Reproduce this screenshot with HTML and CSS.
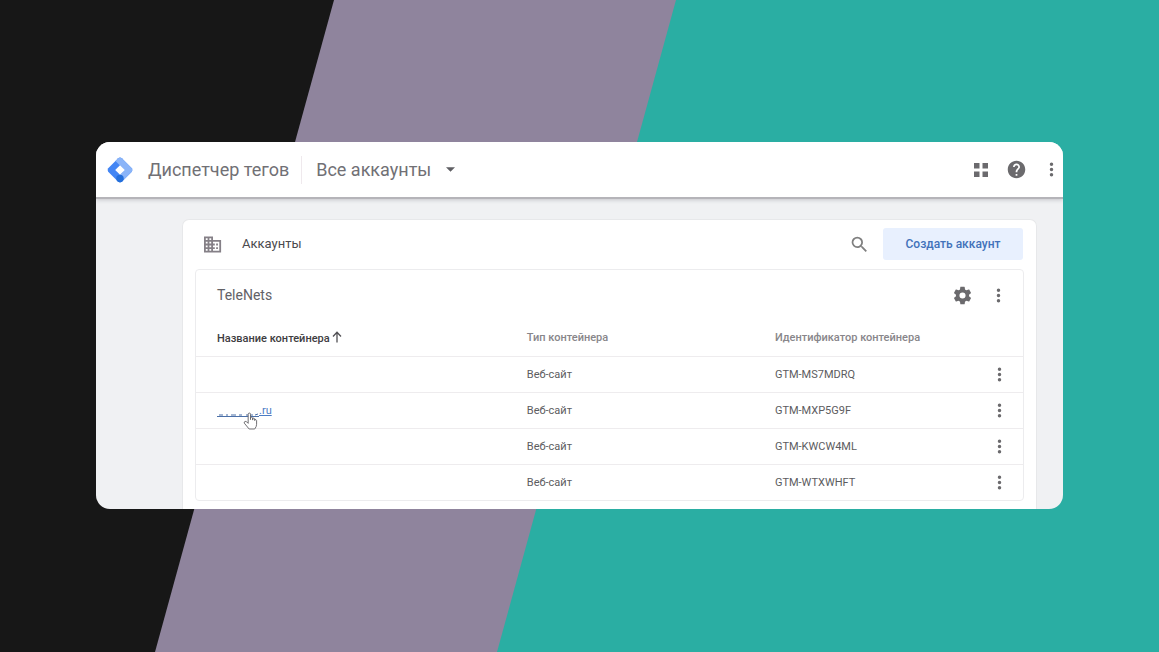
FILE: index.html
```html
<!DOCTYPE html>
<html lang="ru">
<head>
<meta charset="utf-8">
<meta name="viewport" content="width=device-width, initial-scale=1">
<title>Диспетчер тегов</title>
<link rel="stylesheet" href="styles.css">
</head>
<body class="page">
<svg class="backdrop" viewBox="0 0 1159 652" preserveAspectRatio="none" aria-hidden="true">
  <symbol id="more" viewBox="0 0 24 24"><path d="M12 8a2 2 0 1 0 0-4 2 2 0 0 0 0 4zm0 2a2 2 0 1 0 0 4 2 2 0 0 0 0-4zm0 6a2 2 0 1 0 0 4 2 2 0 0 0 0-4z"/></symbol>
  <rect width="1159" height="652" fill="#171717"/>
  <path d="M334 0H1159V652H155Z" fill="#8f849d"/>
  <path d="M676 0H1159V652H497Z" fill="#2aaea3"/>
</svg>
<div class="window">
  <header class="topbar">
    <svg class="logo" viewBox="0 0 26 26" aria-hidden="true">
      <path d="M11.200 1.200Q13 0 14.800 1.200L24.800 11.200Q26 13 24.800 14.800L14.800 24.800Q13 26 11.200 24.800L1.200 14.800Q0 13 1.200 11.200Z" fill="#4285f4"/>
      <path d="M8.500 3.900 11.200 1.200Q13 0 14.800 1.200L24.800 11.200Q26 13 24.800 14.800L17 22.600 13 18 17.500 13Z" fill="#8ab4f8"/>
      <circle cx="13" cy="21.500" r="3.700" fill="#246fdb"/>
      <path d="M13 8.200 17.800 13 13 17.800 8.200 13Z" fill="#fff"/>
    </svg>
    <h1 class="product">Диспетчер тегов</h1>
    <button class="account-switch" type="button">Все аккаунты
      <svg class="caret" viewBox="0 0 10 5" aria-hidden="true"><path d="M0 0h10L5 5z"/></svg>
    </button>
    <div class="tools">
      <button class="icon-button" type="button" aria-label="Приложения"><svg class="icon-apps" viewBox="0 0 14 14"><path d="M0 0h5.500v5.500H0zM8.500 0H14v5.500H8.500zM0 8.500h5.500V14H0zM8.500 8.500H14V14H8.500z"/></svg></button>
      <button class="icon-button" type="button" aria-label="Справка"><svg class="icon" viewBox="0 0 24 24"><path d="M12 2C6.480 2 2 6.480 2 12s4.480 10 10 10 10-4.480 10-10S17.520 2 12 2zm1 17h-2v-2h2v2zm2.070-7.750-.9.920C13.450 12.900 13 13.500 13 15h-2v-.5c0-1.100.45-2.100 1.170-2.830l1.240-1.260c.37-.36.59-.86.59-1.410 0-1.100-.9-2-2-2s-2 .9-2 2H8c0-2.210 1.790-4 4-4s4 1.790 4 4c0 .88-.36 1.680-.93 2.250z"/></svg></button>
      <button class="icon-button" type="button" aria-label="Ещё"><svg class="icon" viewBox="0 0 24 24"><use href="#more"/></svg></button>
    </div>
  </header>
  <main class="content">
    <section class="card">
      <div class="card-head">
        <svg class="icon-office" viewBox="0 0 20 18" aria-hidden="true"><path d="M0 0h10v4h9v14H0zM2 2v2h2V2zM6 2v2h2V2zM2 6v2h2V6zM6 6v2h2V6zM2 10v2h2v-2zM6 10v2h2v-2zM2 14v2h2v-2zM6 14v2h2v-2zM10 6v2h2v2h-2v2h2v2h-2v2h7V6zM13.500 8h2v2h-2zM13.500 12h2v2h-2z" fill-rule="evenodd"/></svg>
        <h2 class="card-title">Аккаунты</h2>
        <button class="icon-button" type="button" aria-label="Поиск"><svg class="icon icon-search" viewBox="0 0 24 24"><path d="M15.500 14h-.79l-.28-.27A6.470 6.470 0 0 0 16 9.500 6.500 6.500 0 1 0 9.500 16c1.610 0 3.090-.59 4.230-1.570l.27.28v.79l5 4.990L20.490 19l-4.990-5zm-6 0C7.010 14 5 11.990 5 9.500S7.010 5 9.500 5 14 7.010 14 9.500 11.990 14 9.500 14z"/></svg></button>
        <button class="create" type="button">Создать аккаунт</button>
      </div>
      <div class="account">
        <div class="account-head">
          <h3 class="account-name">TeleNets</h3>
          <button class="icon-button" type="button" aria-label="Настройки"><svg class="icon" viewBox="0 0 24 24"><path d="M19.430 12.980c.04-.32.07-.64.07-.98s-.03-.66-.07-.98l2.110-1.650c.19-.15.24-.42.12-.64l-2-3.460c-.12-.22-.39-.3-.61-.22l-2.490 1c-.52-.4-1.080-.73-1.690-.98l-.38-2.650A.49.490 0 0 0 14 2h-4c-.25 0-.46.18-.49.42l-.38 2.650c-.61.25-1.170.59-1.690.98l-2.490-1c-.23-.09-.49 0-.61.22l-2 3.460c-.13.22-.07.49.12.64l2.110 1.650c-.04.32-.07.65-.07.98s.03.66.07.98l-2.110 1.650c-.19.15-.24.42-.12.64l2 3.460c.12.22.39.3.61.22l2.490-1c.52.4 1.080.73 1.690.98l.38 2.650c.03.24.24.42.49.42h4c.25 0 .46-.18.49-.42l.38-2.650c.61-.25 1.170-.59 1.690-.98l2.490 1c.23.09.49 0 .61-.22l2-3.460c.12-.22.07-.49-.12-.64zM12 15.500A3.500 3.500 0 1 1 12 8.500a3.500 3.500 0 0 1 0 7z"/></svg></button>
          <button class="icon-button" type="button" aria-label="Действия с аккаунтом"><svg class="icon" viewBox="0 0 24 24"><use href="#more"/></svg></button>
        </div>
        <table class="containers">
          <thead>
            <tr>
              <th class="col-name" scope="col">Название контейнера <svg class="sort" viewBox="0 0 10 12" aria-hidden="true"><path d="M5 11.500V1.500M1 5.500 5 1.300 9 5.500"/></svg></th>
              <th class="col-type" scope="col">Тип контейнера</th>
              <th scope="col">Идентификатор контейнера</th>
              <td class="col-menu"></td>
            </tr>
          </thead>
          <tbody>
            <tr><td class="col-name"></td><td>Веб-сайт</td><td>GTM-MS7MDRQ</td><td class="col-menu"><button class="icon-button" type="button" aria-label="Действия GTM-MS7MDRQ"><svg class="icon" viewBox="0 0 24 24"><use href="#more"/></svg></button></td></tr>
            <tr><td class="col-name"><a class="site" href="#"><svg class="hidden-name" viewBox="0 0 42 5" aria-hidden="true"><path d="M0 4.500H42M2 3h4M9 3h2M14 3h5M22 3h3M29 3h7M38 3l3-1"/></svg>.ru<svg class="pointer" viewBox="0 0 16 19" aria-hidden="true"><path d="M5.500 12V2.500Q5.500 1 6.800 1T8 2.500V8 5.800Q9.200 5 10.300 6.200V8.500 6.700Q11.500 6 12.500 7.200V9 8Q14 7.500 14.500 9V13Q14.500 15.500 12.500 18H6.500L1.400 11.800Q.8 10.400 2.200 10T4 10.500Z"/></svg></a></td><td>Веб-сайт</td><td>GTM-MXP5G9F</td><td class="col-menu"><button class="icon-button" type="button" aria-label="Действия GTM-MXP5G9F"><svg class="icon" viewBox="0 0 24 24"><use href="#more"/></svg></button></td></tr>
            <tr><td class="col-name"></td><td>Веб-сайт</td><td>GTM-KWCW4ML</td><td class="col-menu"><button class="icon-button" type="button" aria-label="Действия GTM-KWCW4ML"><svg class="icon" viewBox="0 0 24 24"><use href="#more"/></svg></button></td></tr>
            <tr><td class="col-name"></td><td>Веб-сайт</td><td>GTM-WTXWHFT</td><td class="col-menu"><button class="icon-button" type="button" aria-label="Действия GTM-WTXWHFT"><svg class="icon" viewBox="0 0 24 24"><use href="#more"/></svg></button></td></tr>
          </tbody>
        </table>
      </div>
    </section>
  </main>
</div>
</body>
</html>
```
FILE: styles.css
```css
* { box-sizing: border-box; }

.page {
  margin: 0;
  min-height: 100vh;
  display: flex;
  flex-direction: column;
  justify-content: center;
  padding: 0 96px 1px;
  font-family: Roboto, "Liberation Sans", sans-serif;
  font-size: 11px;
  color: #5c5c60;
}

.backdrop {
  position: fixed;
  inset: 0;
  width: 100%;
  height: 100%;
  z-index: -1;
}

.window {
  background: #f0f1f3;
  border-radius: 14px;
  overflow: hidden;
}

.topbar {
  display: flex;
  align-items: center;
  height: 57px;
  padding: 0 1px 0 11px;
  background: #fff;
  border-bottom: 2px solid #b5b4b9;
  box-shadow: 0 1px 4px #c4c5ca;
}

.logo { width: 26px; height: 26px; }

.product,
.account-switch {
  margin: 0;
  font-family: Roboto, sans-serif;
  font-size: 18px;
  font-weight: 400;
  line-height: 28px;
  color: #717075;
}

.product {
  padding: 0 12px 0 15px;
  border-right: 1px solid #efe9ed;
}

button {
  border: 0;
  padding: 0;
  background: none;
  font: inherit;
  color: inherit;
}

.account-switch {
  display: flex;
  align-items: center;
  gap: 15px;
  padding: 0 14px;
}

.caret { width: 9px; height: 5px; fill: #5f5f63; }

.tools {
  display: flex;
  align-items: center;
  gap: 13px;
  margin-left: auto;
}

.icon-button {
  display: inline-flex;
  align-items: center;
  justify-content: center;
  width: 22px;
  height: 22px;
  color: #6b6a6d;
}

.icon { width: 21px; height: 21px; fill: currentColor; }
.icon-apps { width: 14px; height: 14px; fill: currentColor; }
.icon-search { color: #808080; }

.content { padding: 20px 26px 0 86px; }

.card {
  padding: 8px 12px;
  background: #fff;
  border: 1px solid #e7e8ea;
  border-bottom: 0;
  border-radius: 7px 7px 0 0;
}

.card-head {
  display: flex;
  align-items: center;
  padding: 0 1px 9px 9px;
}

.icon-office { width: 18px; height: 17px; fill: #858087; }

.card-title {
  flex: 1;
  margin: 0 0 0 20px;
  font-size: 13px;
  font-weight: 400;
  line-height: 20px;
  color: #4b4a4e;
}

.create {
  width: 140px;
  height: 32px;
  margin-left: 13px;
  background: #e8f0fe;
  border-radius: 3px;
  font-size: 12px;
  font-weight: 500;
  color: #4272ba;
}

.account {
  border: 1px solid #ececee;
  border-radius: 4px;
}

.account-head {
  display: flex;
  align-items: center;
  gap: 14px;
  height: 50px;
  padding: 0 14px 0 21px;
}

.account-name {
  flex: 1;
  margin: 0;
  font-size: 14px;
  font-weight: 400;
  color: #626166;
}

.containers {
  width: 100%;
  table-layout: fixed;
  border-collapse: collapse;
}

.containers th,
.containers td {
  height: 36px;
  padding: 0;
  text-align: left;
  vertical-align: middle;
}

.containers th { font-weight: 500; color: #88868a; }
.containers .col-name { width: 40%; padding-left: 21px; }
.containers th.col-name { color: #3e3d41; }
.containers .col-type { width: 30%; }
.containers .col-menu { width: 48px; text-align: center; }
.containers tbody tr { border-top: 1px solid #eeecee; }
.col-menu .icon-button { vertical-align: middle; }

.sort {
  width: 10px;
  height: 12px;
  vertical-align: -1px;
  fill: none;
  stroke: #515054;
  stroke-width: 1.3;
}

.site {
  position: relative;
  color: #4c7cc4;
  text-decoration: underline;
}

.hidden-name {
  width: 42px;
  height: 5px;
  vertical-align: -3px;
  stroke: #4c70a8;
  stroke-width: 1;
}

.pointer {
  position: absolute;
  left: 26px;
  top: 8px;
  width: 15px;
  height: 18px;
  fill: #fff;
  stroke: #66656a;
}
```
